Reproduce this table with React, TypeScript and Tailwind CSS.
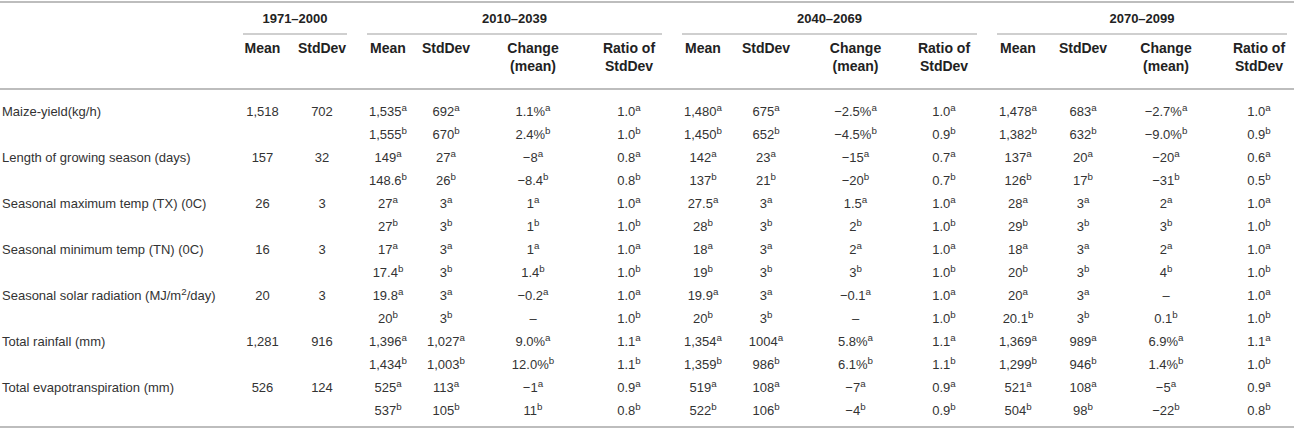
import type { ReactNode } from "react";

const cols = [
  "w-[59px]",
  "w-[63px] pr-[3px]",
  "w-[62px] pl-[4px]",
  "w-[73px] pr-[15px]",
  "w-[91px] pr-[5px]",
  "w-[85px] pl-[11px]",
  "w-[69px] pl-[5px]",
  "w-[76px] pr-[14px]",
  "w-[89px]",
  "w-[81px] pl-[7px]",
  "w-[69px] pl-[5px]",
  "w-[75px] pr-[9px]",
  "w-[87px] pr-[5px]",
  "w-[82px] pl-[12px]",
];

const groups = [
  { title: "1971–2000", w: "w-[122px]", line: "ml-[10px] mr-[8px]" },
  { title: "2010–2039", w: "w-[311px]", line: "ml-[12px] mr-[4px]" },
  { title: "2040–2069", w: "w-[315px]", line: "ml-[16px] mr-[4px]" },
  { title: "2070–2099", w: "w-[313px]", line: "ml-[16px] mr-[7px]" },
];

const sub: ReactNode[] = [
  "Mean",
  "StdDev",
  ...Array.from({ length: 3 }).flatMap(() => [
    "Mean",
    "StdDev",
    <>Change<br />(mean)</>,
    <>Ratio of<br />StdDev</>,
  ]),
];

type Row = { label: ReactNode; base: string[]; a: string[]; b: string[] };

const rows: Row[] = [
  {
    label: "Maize-yield(kg/h)",
    base: ["1,518", "702"],
    a: ["1,535", "692", "1.1%", "1.0", "1,480", "675", "−2.5%", "1.0", "1,478", "683", "−2.7%", "1.0"],
    b: ["1,555", "670", "2.4%", "1.0", "1,450", "652", "−4.5%", "0.9", "1,382", "632", "−9.0%", "0.9"],
  },
  {
    label: "Length of growing season (days)",
    base: ["157", "32"],
    a: ["149", "27", "−8", "0.8", "142", "23", "−15", "0.7", "137", "20", "−20", "0.6"],
    b: ["148.6", "26", "−8.4", "0.8", "137", "21", "−20", "0.7", "126", "17", "−31", "0.5"],
  },
  {
    label: "Seasonal maximum temp (TX) (0C)",
    base: ["26", "3"],
    a: ["27", "3", "1", "1.0", "27.5", "3", "1.5", "1.0", "28", "3", "2", "1.0"],
    b: ["27", "3", "1", "1.0", "28", "3", "2", "1.0", "29", "3", "3", "1.0"],
  },
  {
    label: "Seasonal minimum temp (TN) (0C)",
    base: ["16", "3"],
    a: ["17", "3", "1", "1.0", "18", "3", "2", "1.0", "18", "3", "2", "1.0"],
    b: ["17.4", "3", "1.4", "1.0", "19", "3", "3", "1.0", "20", "3", "4", "1.0"],
  },
  {
    label: <>Seasonal solar radiation (MJ/m<sup>2</sup>/day)</>,
    base: ["20", "3"],
    a: ["19.8", "3", "−0.2", "1.0", "19.9", "3", "−0.1", "1.0", "20", "3", "–", "1.0"],
    b: ["20", "3", "–", "1.0", "20", "3", "–", "1.0", "20.1", "3", "0.1", "1.0"],
  },
  {
    label: "Total rainfall (mm)",
    base: ["1,281", "916"],
    a: ["1,396", "1,027", "9.0%", "1.1", "1,354", "1004", "5.8%", "1.1", "1,369", "989", "6.9%", "1.1"],
    b: ["1,434", "1,003", "12.0%", "1.1", "1,359", "986", "6.1%", "1.1", "1,299", "946", "1.4%", "1.0"],
  },
  {
    label: "Total evapotranspiration (mm)",
    base: ["526", "124"],
    a: ["525", "113", "−1", "0.9", "519", "108", "−7", "0.9", "521", "108", "−5", "0.9"],
    b: ["537", "105", "11", "0.8", "522", "106", "−4", "0.9", "504", "98", "−22", "0.8"],
  },
];

function Val({ v, s }: { v: string; s: string }) {
  if (v === "–") return <>–</>;
  return (
    <>
      {v}
      <sup>{s}</sup>
    </>
  );
}

function Line({ label, cells }: { label?: ReactNode; cells: ReactNode[] }) {
  return (
    <div className="flex h-[23px] items-center">
      <div className="w-[233px] shrink-0 pl-[2px] whitespace-nowrap">{label}</div>
      {cells.map((c, i) => (
        <div key={i} className={`${cols[i]} shrink-0 text-center whitespace-nowrap`}>
          {c}
        </div>
      ))}
    </div>
  );
}

export default function App() {
  return (
    <div className="w-[1294px] bg-white pt-[1px] font-['Liberation_Sans',Arial,sans-serif] text-[13px] text-[#333]">
      <div className="border-t-2 border-b-2 border-[#bdbdbd]">
        {/* header */}
        <div className="border-b-2 border-[#bdbdbd] font-bold text-[#222]">
          <div className="flex pt-[7px]">
            <div className="w-[233px] shrink-0" />
            {groups.map((g) => (
              <div key={g.title} className={`${g.w} shrink-0`}>
                <div className={`${g.line} border-b-2 border-[#cfcfcf] pb-[5px] text-center leading-[18px]`}>
                  {g.title}
                </div>
              </div>
            ))}
          </div>
          <div className="flex pt-[4px] pb-[13px] text-[14px] leading-[18px]">
            <div className="w-[233px] shrink-0" />
            {sub.map((s, i) => (
              <div key={i} className={`${cols[i]} shrink-0 text-center whitespace-nowrap`}>
                {s}
              </div>
            ))}
          </div>
        </div>

        {/* body */}
        <div className="pt-[10px] pb-[4px]">
          {rows.map((r, ri) => (
            <div key={ri}>
              <Line
                label={r.label}
                cells={[
                  r.base[0],
                  r.base[1],
                  ...r.a.map((v, i) => <Val key={i} v={v} s="a" />),
                ]}
              />
              <Line
                cells={[
                  "",
                  "",
                  ...r.b.map((v, i) => <Val key={i} v={v} s="b" />),
                ]}
              />
            </div>
          ))}
        </div>
      </div>
    </div>
  );
}
